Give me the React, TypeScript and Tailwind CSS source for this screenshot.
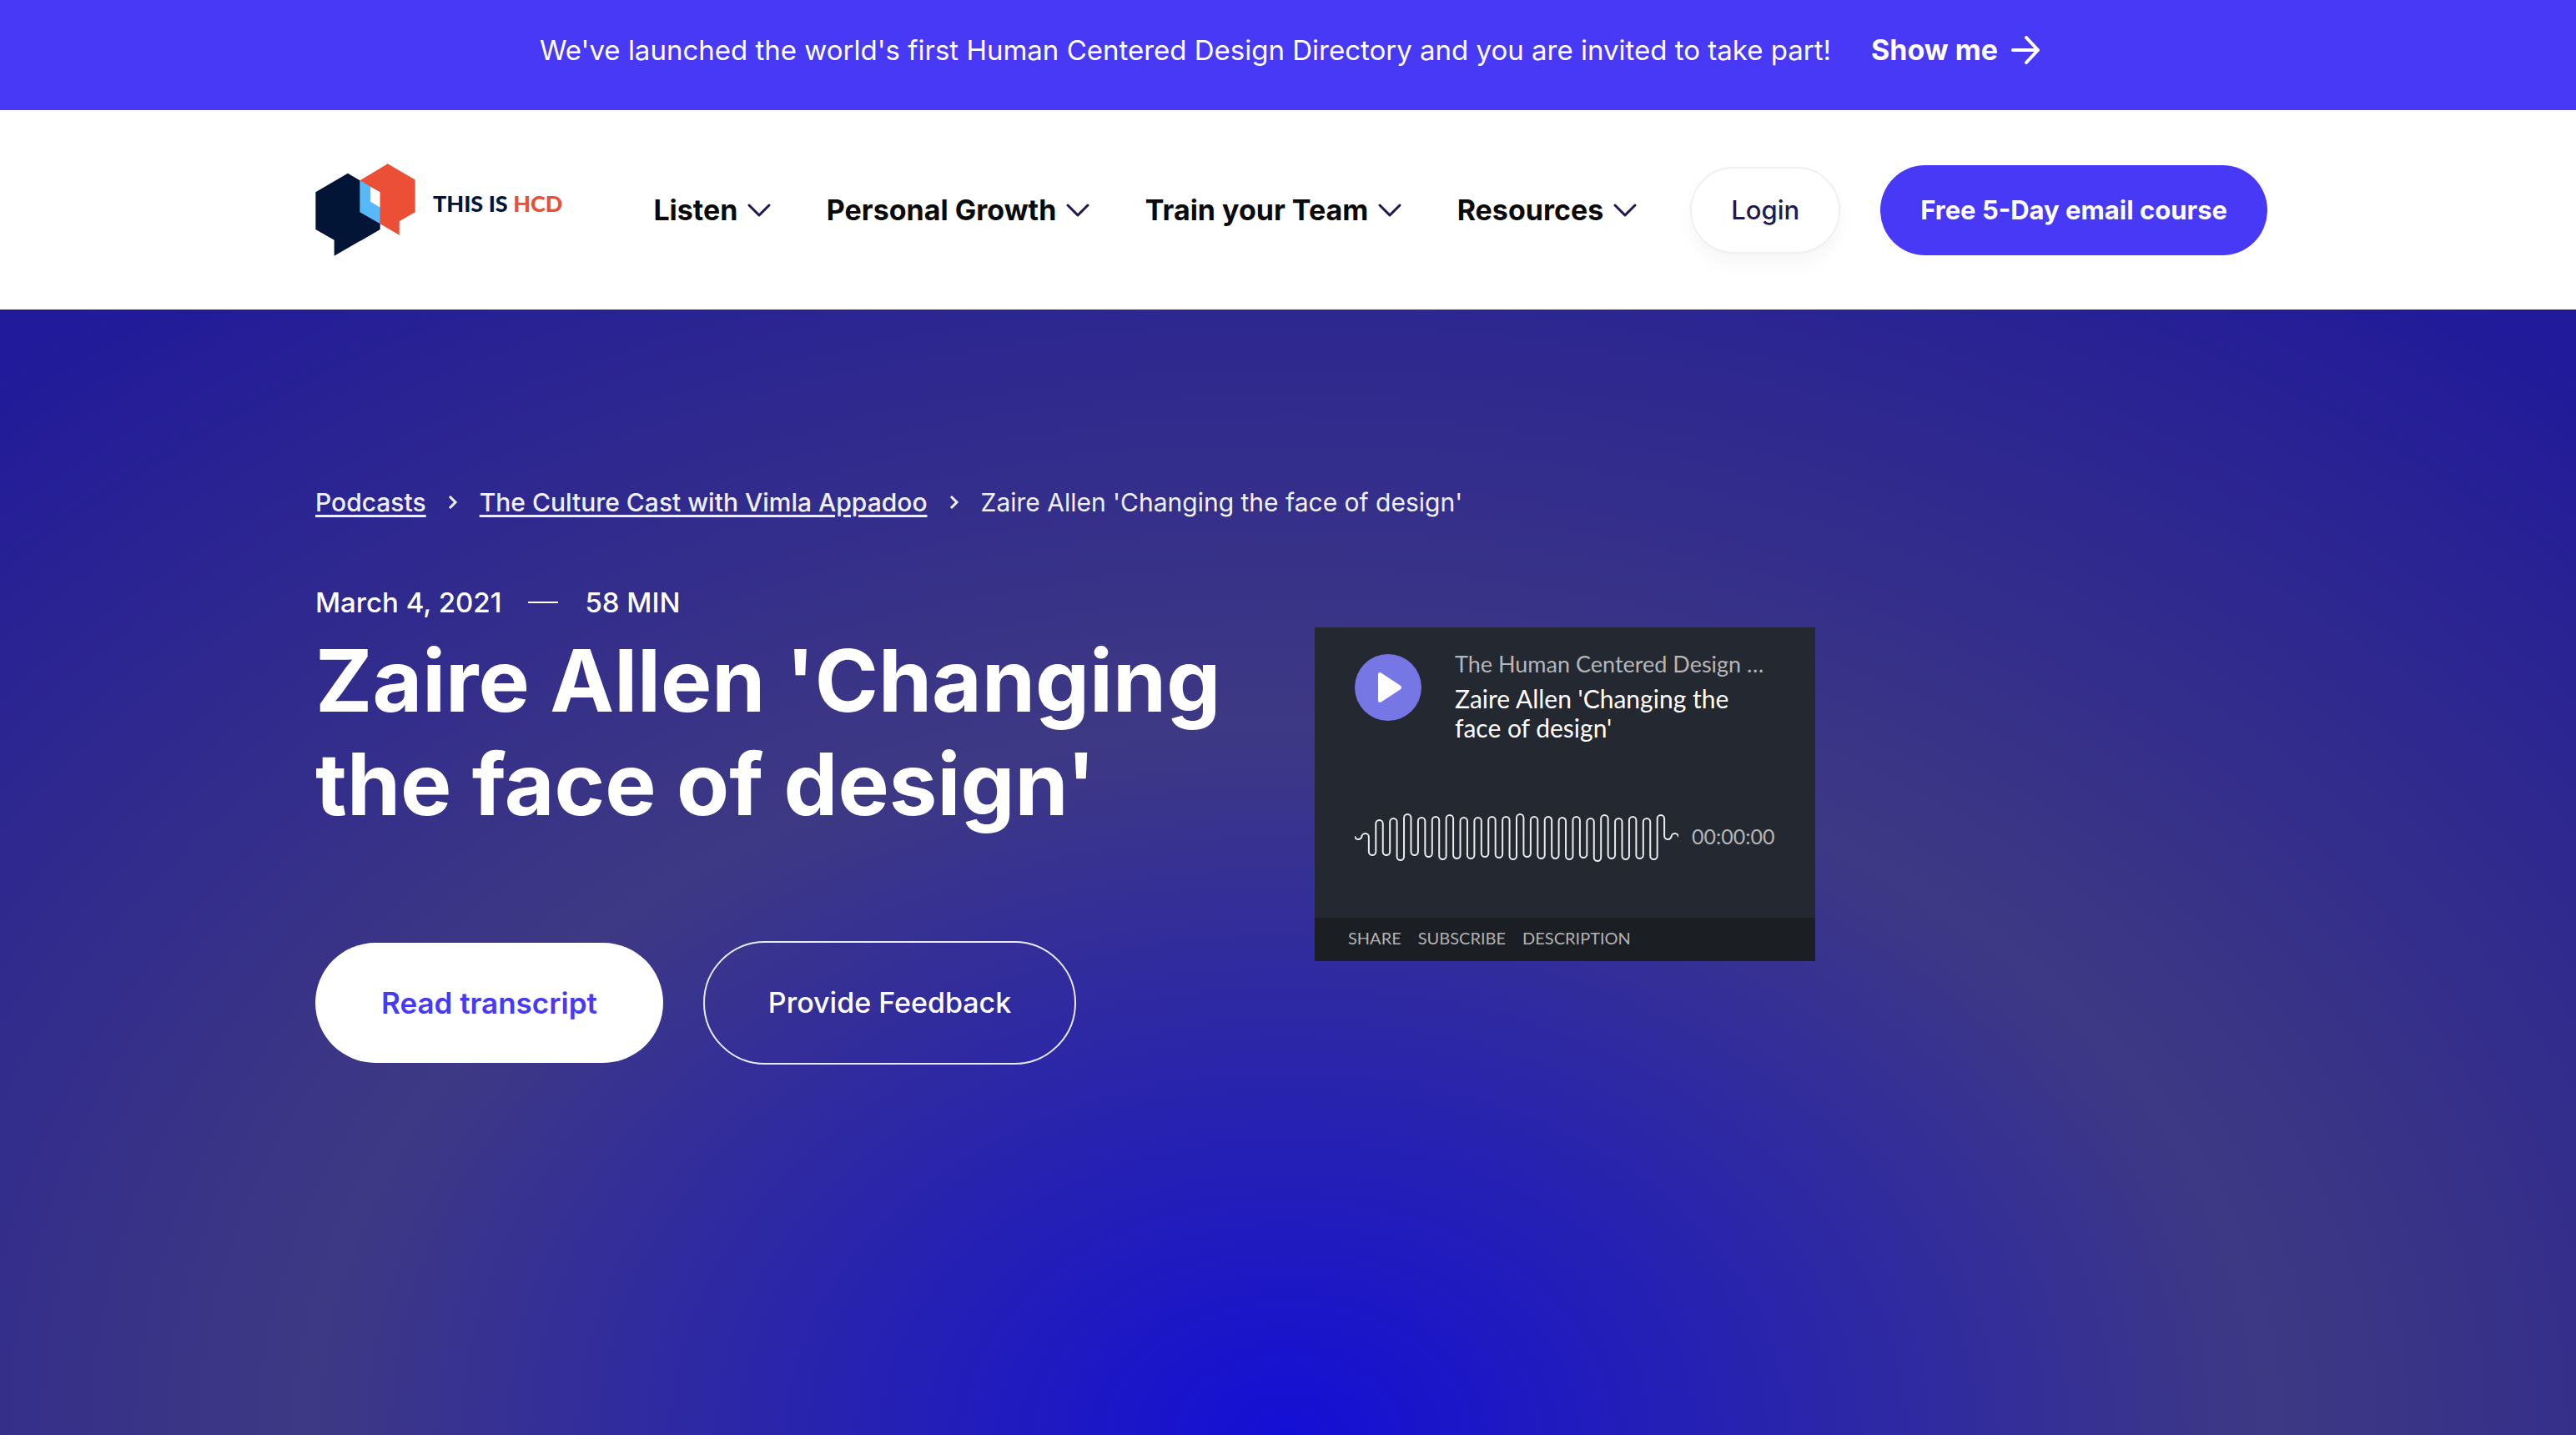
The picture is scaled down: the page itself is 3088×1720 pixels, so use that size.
const NAV = ['Listen', 'Personal Growth', 'Train your Team', 'Resources'];

// Alternating trough and crest heights of the player's wave line.
const TROUGHS = [34, 53, 53, 59, 53, 55, 58, 57, 57, 55, 56, 58, 55, 57, 57, 58, 56, 60, 57, 58, 57, 58, 34];
const CRESTS = [27, 11, 9, 4, 8, 7, 5, 8, 8, 7, 7, 4, 7, 7, 8, 7, 9, 5, 9, 7, 9, 5, 27];

function wavePath() {
  const step = 388 / (TROUGHS.length * 2);
  const r = step / 2;
  let d = 'M0 31';
  TROUGHS.forEach((trough, i) => {
    const x = i * 2 * step;
    const crest = CRESTS[i];
    d += ` L${x} ${Math.max(trough - r, 30)} A${r} ${r} 0 0 0 ${x + step} ${trough - r}`;
    d += ` L${x + step} ${crest + r} A${r} ${r} 0 0 1 ${x + 2 * step} ${crest + r}`;
  });
  return d;
}

function Logo() {
  return (
    <a href="#home" aria-label="This is HCD" className="flex shrink-0 items-center gap-[21px]">
      <svg viewBox="54 47 361 334" className="h-[111px] w-[120px]" aria-hidden="true">
        <path fill="#031537" d="M55 150 171 82 287 150V285L122 380V323L55 285Z" />
        <path fill="#eb5036" d="M315 48 414 106V222L357 255V305L215 222V108Z" />
        <path fill="#031537" d="M215 222 287 264V285L215 327Z" />
        <path fill="#56baf8" d="M215 108 287 150V264L215 222Z" />
        <path fill="#fff" d="M253 131 287 150V205L253 185Z" />
      </svg>
      <span className="mb-4 font-['Lato',sans-serif] text-[27px] leading-8 font-black whitespace-nowrap text-[#031537]">
        THIS IS <span className="text-[#eb5036]">HCD</span>
      </span>
    </a>
  );
}

function CrumbChevron() {
  return (
    <svg viewBox="0 0 12 16" className="h-4 w-3" fill="none" stroke="currentColor" strokeWidth="3" aria-hidden="true">
      <path d="M2 1 9 8 2 15" />
    </svg>
  );
}

function Player() {
  return (
    <section aria-label="Podcast player" className="w-[600px] bg-[#242830] font-['Lato',sans-serif]">
      <div className="px-12 pt-6 pb-16">
        <div className="flex items-start gap-10">
          <button type="button" aria-label="Play" className="mt-2 flex size-20 shrink-0 items-center justify-center rounded-full bg-[#7676e5]">
            <svg viewBox="0 0 28 36" className="ml-1 h-9 w-7" fill="#fff" aria-hidden="true">
              <path d="M0 3Q0 -1.500 4 .8L26.500 15.500Q29.500 18 26.500 20.500L4 35.200Q0 37.500 0 33Z" />
            </svg>
          </button>
          <div className="min-w-0 flex-1">
            <p className="mt-0.5 text-[27px] leading-9 whitespace-nowrap text-[#b5b6b8]">The Human Centered Design …</p>
            <p className="mt-1.5 text-[30px] leading-[35px] text-white">Zaire Allen 'Changing the face of design'</p>
          </div>
        </div>
        <div className="mt-[82px] flex items-center gap-4">
          <svg viewBox="0 0 388 64" className="h-16 w-[388px] shrink-0" fill="none" stroke="#ececef" strokeWidth="2" aria-hidden="true">
            <path d={wavePath()} />
          </svg>
          <span className="mb-1 text-[25px] leading-8 text-[#b5b6b8]">00:00:00</span>
        </div>
      </div>
      <div className="flex h-[52px] items-center gap-5 bg-[#1b1e22] px-10 pb-1 text-[20px] leading-6 text-[#b2b3b5]">
        <button type="button">SHARE</button>
        <button type="button">SUBSCRIBE</button>
        <button type="button">DESCRIPTION</button>
      </div>
    </section>
  );
}

export default function App() {
  return (
    <div className="flex min-h-screen flex-col bg-white font-['Inter',sans-serif]">
      <div className="flex items-center justify-center gap-12 bg-[#4739f5] pt-8 pb-11 pl-1 text-[33px] leading-14 text-white">
        <p>We've launched the world's first Human Centered Design Directory and you are invited to take part!</p>
        <a href="#directory" className="flex items-center gap-4 text-[34px] font-bold">
          Show me
          <svg viewBox="0 0 34 34" className="size-[34px]" fill="none" stroke="currentColor" strokeWidth="4" strokeLinecap="round" strokeLinejoin="round" aria-hidden="true">
            <path d="M2 17H32M18 2 32 17 18 32" />
          </svg>
        </a>
      </div>

      <header className="flex items-center py-16 pr-[370px] pl-[378px]">
        <Logo />
        <nav className="mr-16 ml-[109px] flex flex-1 items-center justify-between">
          {NAV.map((item) => (
            <button key={item} type="button" className="flex items-center gap-3 text-[34px] leading-11 font-bold whitespace-nowrap text-[#0a0a0a]">
              {item}
              <svg viewBox="0 0 28 18" className="h-[18px] w-7" fill="none" stroke="#1f1a55" strokeWidth="3" strokeLinecap="round" strokeLinejoin="round" aria-hidden="true">
                <path d="M2 3 14 15 26 3" />
              </svg>
            </button>
          ))}
        </nav>
        <div className="flex items-center gap-12">
          <a href="#login" className="rounded-full border-2 border-[#efeff6] bg-white px-[47px] py-7 text-[31px] leading-11 font-medium text-[#1f1a4f] shadow-[0_12px_24px_rgba(0,0,0,0.04)]">
            Login
          </a>
          <a href="#course" className="rounded-full bg-[#4739f5] px-12 py-8 text-[31px] leading-11 font-bold whitespace-nowrap text-white">
            Free 5-Day email course
          </a>
        </div>
      </header>

      <main className="flex-1 bg-[radial-gradient(76%_126%_at_50%_100%,#140fd6_0%,#3e3983_50%,#211a9a_100%)] pt-[207px] pr-[370px] pb-[444px] pl-[378px] text-white">
        <nav aria-label="Breadcrumb" className="flex items-center gap-[26px] text-[30px] leading-12 text-[#f0f0fa]">
          <a href="#podcasts" className="font-medium underline decoration-[3px] underline-offset-4">Podcasts</a>
          <CrumbChevron />
          <a href="#culture-cast" className="font-medium underline decoration-[3px] underline-offset-4">The Culture Cast with Vimla Appadoo</a>
          <CrumbChevron />
          <span>Zaire Allen 'Changing the face of design'</span>
        </nav>

        <div className="mt-[68px] grid grid-cols-2 items-start gap-x-14">
          <div>
            <div className="flex items-center gap-8 text-[33px] leading-14 font-medium">
              <time dateTime="2021-03-04">March 4, 2021</time>
              <span className="h-0.5 w-9 bg-white" />
              <span>58 MIN</span>
            </div>
            <h1 className="mt-1 text-[103px] leading-[124px] font-bold">Zaire Allen 'Changing the face of design'</h1>
            <div className="mt-[126px] flex items-center gap-12">
              <a href="#transcript" className="rounded-full bg-white px-[79px] py-[50px] text-[35px] leading-11 font-semibold text-[#4739f5]">
                Read transcript
              </a>
              <a href="#feedback" className="rounded-full border-2 border-[#e9e9f8] px-[76px] py-[50px] text-[34px] leading-11 font-medium">
                Provide Feedback
              </a>
            </div>
          </div>
          <div className="pt-[58px]">
            <Player />
          </div>
        </div>
      </main>
    </div>
  );
}
